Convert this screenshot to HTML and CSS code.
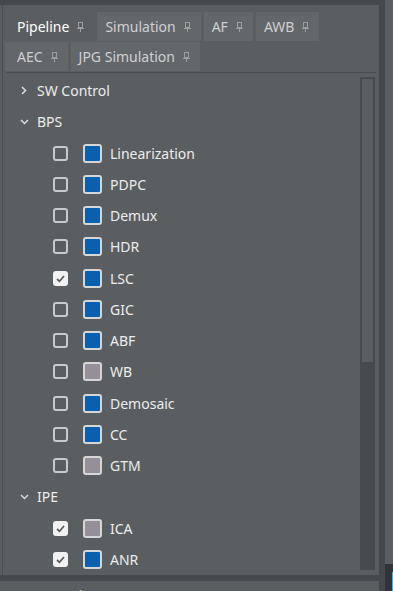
FILE: index.html
```html
<!DOCTYPE html>
<html lang="en">
<head>
<meta charset="UTF-8">
<title>Pipeline</title>
<link rel="stylesheet" href="styles.css">
</head>
<body>
<div class="left">
    <div class="topstrip"></div>

    <div class="panel">
        <!-- タブ -->
        <div class="tab-row">
            <div class="tab first active">Pipeline <svg class="pin" width="7" height="10" viewBox="0 0 7 10"><rect x="1.5" y="0.5" width="4" height="5" fill="none" stroke="currentColor"/><path d="M0 6.5h7M3.5 6.5V10" stroke="currentColor"/></svg></div>
            <div class="tab">Simulation <svg class="pin" width="7" height="10" viewBox="0 0 7 10"><rect x="1.5" y="0.5" width="4" height="5" fill="none" stroke="currentColor"/><path d="M0 6.5h7M3.5 6.5V10" stroke="currentColor"/></svg></div>
            <div class="tab">AF <svg class="pin" width="7" height="10" viewBox="0 0 7 10"><rect x="1.5" y="0.5" width="4" height="5" fill="none" stroke="currentColor"/><path d="M0 6.5h7M3.5 6.5V10" stroke="currentColor"/></svg></div>
            <div class="tab">AWB <svg class="pin" width="7" height="10" viewBox="0 0 7 10"><rect x="1.5" y="0.5" width="4" height="5" fill="none" stroke="currentColor"/><path d="M0 6.5h7M3.5 6.5V10" stroke="currentColor"/></svg></div>
        </div>
        <div class="tab-row">
            <div class="tab first">AEC <svg class="pin" width="7" height="10" viewBox="0 0 7 10"><rect x="1.5" y="0.5" width="4" height="5" fill="none" stroke="currentColor"/><path d="M0 6.5h7M3.5 6.5V10" stroke="currentColor"/></svg></div>
            <div class="tab">JPG Simulation <svg class="pin" width="7" height="10" viewBox="0 0 7 10"><rect x="1.5" y="0.5" width="4" height="5" fill="none" stroke="currentColor"/><path d="M0 6.5h7M3.5 6.5V10" stroke="currentColor"/></svg></div>
        </div>
        <div class="sep"></div>

        <!-- ツリー -->
        <div class="tree-area">
            <div class="tree">
                <div class="group"><span class="chev"><svg width="6" height="9" viewBox="0 0 6 9"><path d="M1 1l3.5 3.5L1 8" fill="none" stroke="currentColor" stroke-width="1.5"/></svg></span>SW Control</div>
                <div class="group"><span class="chev"><svg width="9" height="6" viewBox="0 0 9 6"><path d="M1 1l3.5 3.5L8 1" fill="none" stroke="currentColor" stroke-width="1.5"/></svg></span>BPS</div>
                <div class="item"><span class="check"></span><span class="swatch blue"></span>Linearization</div>
                <div class="item"><span class="check"></span><span class="swatch blue"></span>PDPC</div>
                <div class="item"><span class="check"></span><span class="swatch blue"></span>Demux</div>
                <div class="item"><span class="check"></span><span class="swatch blue"></span>HDR</div>
                <div class="item"><span class="check on"><svg width="11" height="11" viewBox="0 0 11 11"><path d="M2 6l2.5 2.3L9 3" fill="none" stroke="currentColor" stroke-width="1.7"/></svg></span><span class="swatch blue"></span>LSC</div>
                <div class="item"><span class="check"></span><span class="swatch blue"></span>GIC</div>
                <div class="item"><span class="check"></span><span class="swatch blue"></span>ABF</div>
                <div class="item"><span class="check"></span><span class="swatch gray"></span>WB</div>
                <div class="item"><span class="check"></span><span class="swatch blue"></span>Demosaic</div>
                <div class="item"><span class="check"></span><span class="swatch blue"></span>CC</div>
                <div class="item"><span class="check"></span><span class="swatch gray"></span>GTM</div>
                <div class="group"><span class="chev"><svg width="9" height="6" viewBox="0 0 9 6"><path d="M1 1l3.5 3.5L8 1" fill="none" stroke="currentColor" stroke-width="1.5"/></svg></span>IPE</div>
                <div class="item"><span class="check on"><svg width="11" height="11" viewBox="0 0 11 11"><path d="M2 6l2.5 2.3L9 3" fill="none" stroke="currentColor" stroke-width="1.7"/></svg></span><span class="swatch gray"></span>ICA</div>
                <div class="item"><span class="check on"><svg width="11" height="11" viewBox="0 0 11 11"><path d="M2 6l2.5 2.3L9 3" fill="none" stroke="currentColor" stroke-width="1.7"/></svg></span><span class="swatch blue"></span>ANR</div>
            </div>
            <div class="scrollbar"><div class="thumb"></div></div>
        </div>
    </div>

    <div class="band"></div>
    <div class="bottom-panel">Feature Points</div>
</div>
<div class="divider"></div>
<div class="side">
    <div class="side-top"></div>
    <div class="side-bottom"><div class="accent"></div></div>
</div>
</body>
</html>
```

FILE: styles.css
```css
body {
font-family: "Noto Sans", "Open Sans", sans-serif;
margin: 0;
width: 393px;
height: 591px;
overflow: hidden;
display: flex;
background-color: #5a5e61;
}
.left {
width: 379px;
display: flex;
flex-direction: column;
}
.topstrip {
height: 5px;
flex-shrink: 0;
background-color: #46494b;
}
.panel {
height: 570px;
flex-shrink: 0;
margin-left: 2px;
border-left: 1px solid #4b4f51;
display: flex;
flex-direction: column;
padding-top: 7px;
box-sizing: border-box;
}
.tab-row {
display: flex;
gap: 3px;
padding-left: 2px;
margin-bottom: 1px;
}
.tab {
height: 29px;
display: flex;
align-items: center;
gap: 8px;
padding: 0 10px 0 8px;
background-color: #63676a;
color: #cdd0d2;
font-size: 14px;
}
.tab.first {
padding-left: 12px;
}
.tab.active {
background-color: transparent;
color: #ffffff;
}
.pin {
color: #9b9fa1;
}
.sep {
height: 1px;
margin: 0 3px 0 3px;
background-color: #4a4e50;
}
.tree-area {
flex: 1;
display: flex;
min-height: 0;
}
.tree {
flex: 1;
padding-top: 2px;
color: #ececec;
font-size: 14px;
}
.group {
height: 31.25px;
display: flex;
align-items: center;
padding-left: 13px;
gap: 5px;
}
.chev {
width: 16px;
display: flex;
justify-content: center;
color: #dcdcdc;
}
.item {
height: 31.25px;
display: flex;
align-items: center;
padding-left: 50px;
}
.check {
width: 15px;
height: 15px;
box-sizing: border-box;
border: 2px solid #c9c9c9;
border-radius: 3px;
margin-right: 15px;
display: flex;
align-items: center;
justify-content: center;
}
.check.on {
background-color: #f2f2f2;
border-color: #f2f2f2;
color: #5a5a5a;
}
.swatch {
width: 19px;
height: 19px;
box-sizing: border-box;
border: 2px solid #d6d6d6;
border-radius: 3px;
margin-right: 8px;
}
.swatch.blue {
background-color: #0a5fae;
}
.swatch.gray {
background-color: #948f99;
}
.scrollbar {
width: 15px;
margin: 4px 4px 5px 0;
padding: 2px;
box-sizing: border-box;
background-color: #474b4d;
}
.thumb {
height: 283px;
background-color: #5a5e61;
}
.band {
height: 6px;
flex-shrink: 0;
background-color: #45494b;
}
.bottom-panel {
flex: 1;
min-height: 0;
overflow: hidden;
padding: 5px 0 0 8px;
color: #e8e8e8;
font-size: 14px;
}
.divider {
width: 6px;
background-color: #46494b;
}
.side {
flex: 1;
display: flex;
flex-direction: column;
}
.side-top {
flex: 1;
}
.side-bottom {
height: 19px;
background-color: #303436;
display: flex;
justify-content: flex-end;
padding-top: 8px;
}
.accent {
width: 1px;
background-color: #3cb4e6;
}
```
